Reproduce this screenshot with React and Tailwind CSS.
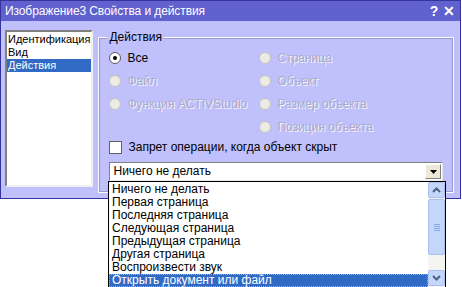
import React from "react";

const FONT = { fontFamily: "'Liberation Sans', Arial, sans-serif" };

function Radio({ label, checked, disabled }) {
  return (
    <div className="flex items-center h-[16px] gap-[6px]">
      <span
        className={`relative w-[12px] h-[12px] rounded-full border ${disabled ? "border-[#c4c4bc] bg-[#ecebe4]" : "border-[#5a5a5a] bg-white"}`}
      >
        {checked && <span className="absolute left-[3px] top-[3px] w-[4px] h-[4px] rounded-full bg-black" />}
      </span>
      <span
        className={disabled ? "text-[#ababc6] [text-shadow:1px_1px_0_#f4f4ff]" : "text-black"}
      >
        {label}
      </span>
    </div>
  );
}

const items = [
  "Ничего не делать",
  "Первая страница",
  "Последняя страница",
  "Следующая страница",
  "Предыдущая страница",
  "Другая страница",
  "Воспроизвести звук",
  "Открыть документ или файл",
];

export default function App() {
  return (
    <div className="relative w-[462px] h-[287px] bg-white overflow-hidden text-[12px] leading-[13px]" style={FONT}>
      <div className="w-[461px] h-[199px] border border-[#34349a] bg-[#c0c0fc] flex flex-col">
        <div className="h-[20px] bg-[#6060ce] flex items-center justify-between px-[4px] text-white text-[12px] tracking-[-0.1px]">
          <span>Изображение3 Свойства и действия</span>
          <span className="flex items-center gap-[5px] font-bold text-[14px] pr-[1px]">
            <span>?</span>
            <span>✕</span>
          </span>
        </div>
        <div className="flex flex-1 pl-[4px] pt-[9px] pr-[9px] pb-[5px] gap-[5px]">
          <div className="w-[91px] h-[157px] bg-white border-2 border-t-[#808080] border-l-[#808080] border-r-[#f0f0f0] border-b-[#f0f0f0] py-[1px] text-[11px] whitespace-nowrap">
            <div className="px-[1px] h-[13px]">Идентификация</div>
            <div className="px-[1px] h-[13px]">Вид</div>
            <div className="px-[1px] h-[13px] bg-[#316ac5] text-white">Действия</div>
          </div>
          <div className="relative flex-1 mt-[7px] h-[156px] border border-[#fafaff] outline outline-[#9c9cc4] -outline-offset-2 px-[10px] pt-[10px]">
            <span className="absolute left-[8px] -top-[7px] bg-[#c0c0fc] px-[2px]">Действия</span>
            <div className="grid grid-cols-[150px_1fr] gap-y-[7px] pt-[2px]">
              <Radio label="Все" checked />
              <Radio label="Страница" disabled />
              <Radio label="Файл" disabled />
              <Radio label="Объект" disabled />
              <Radio label="Функция ACTIVStudio" disabled />
              <Radio label="Размер объекта" disabled />
              <div />
              <Radio label="Позиция объекта" disabled />
            </div>
            <div className="flex items-center gap-[6px] mt-[5px] h-[14px]">
              <span className="w-[13px] h-[13px] bg-white border border-[#606060]" />
              <span>Запрет операции, когда объект скрыт</span>
            </div>
            <div className="mt-[8px] h-[19px] w-[334px] bg-white border border-t-[#808080] border-l-[#808080] border-r-[#e8e8e8] border-b-[#e8e8e8] flex items-center justify-between pl-[3px] pr-[1px]">
              <span>Ничего не делать</span>
              <span className="w-[16px] h-[15px] bg-[#ece9d8] border border-t-white border-l-white border-r-[#808080] border-b-[#808080] flex items-center justify-center">
                <svg width="7" height="4" viewBox="0 0 7 4"><path d="M0 0h7L3.5 4z" fill="#000" /></svg>
              </span>
            </div>
          </div>
        </div>
      </div>

      <div className="absolute left-[108px] top-[181px] w-[338px] h-[110px] bg-white border border-black flex">
        <div className="flex-1 flex flex-col pt-[1px]">
          {items.map((t, i) => (
            <div
              key={t}
              className={`h-[13px] pl-[3px] ${i === items.length - 1 ? "bg-[#316ac5] text-white outline outline-1 outline-dotted outline-[#f0a040] -outline-offset-1" : ""}`}
            >
              {t}
            </div>
          ))}
        </div>
        <div className="w-[17px] bg-[#f4f4f0] flex flex-col">
          <div className="h-[16px] mb-[1px] rounded-[2px] bg-[#c4d6fa] border border-[#a8bff0] flex items-center justify-center">
            <svg width="9" height="6" viewBox="0 0 9 6"><path d="M1 5l3.5-3.5L8 5" stroke="#4d6185" strokeWidth="2" fill="none" /></svg>
          </div>
          <div className="h-[56px] rounded-[2px] bg-[#c4d6fa] border border-[#a8bff0] flex flex-col items-center justify-center gap-[1px]">
            <span className="w-[6px] h-px bg-[#8aa8e8]" />
            <span className="w-[6px] h-px bg-[#8aa8e8]" />
            <span className="w-[6px] h-px bg-[#8aa8e8]" />
            <span className="w-[6px] h-px bg-[#8aa8e8]" />
          </div>
          <div className="flex-1" />
          <div className="h-[16px] mb-[4px] rounded-[2px] bg-[#c4d6fa] border border-[#a8bff0] flex items-center justify-center">
            <svg width="9" height="6" viewBox="0 0 9 6"><path d="M1 1l3.5 3.5L8 1" stroke="#4d6185" strokeWidth="2" fill="none" /></svg>
          </div>
        </div>
      </div>
    </div>
  );
}
